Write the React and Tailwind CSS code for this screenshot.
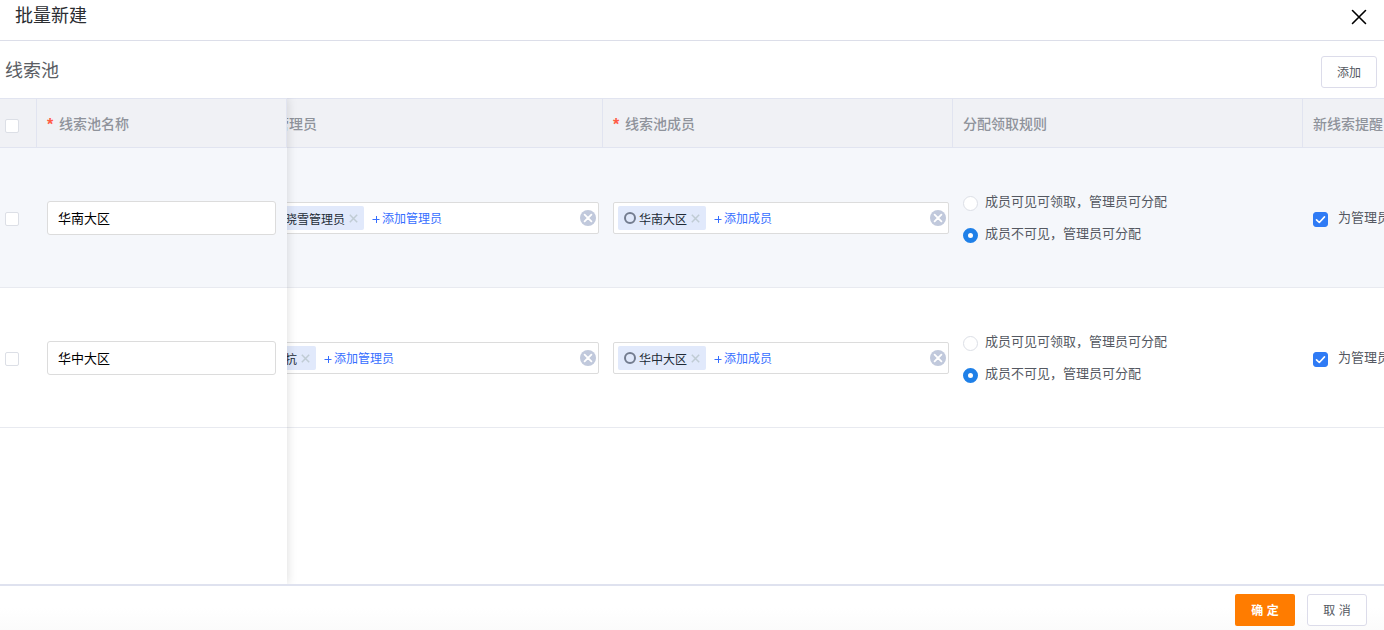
import { useLayoutEffect, useRef, useState } from "react";

const FONT = "font-['Liberation_Sans','Noto_Sans_CJK_SC',sans-serif]";

const POOLS = [
  { id: "south", name: "华南大区", manager: "晓雪管理员", member: "华南大区" },
  { id: "central", name: "华中大区", manager: "抗", member: "华中大区" },
];

function Tick({ label, checked = false }) {
  const [on, setOn] = useState(checked);
  return (
    <input
      type="checkbox"
      aria-label={label}
      checked={on}
      onChange={() => setOn(!on)}
      className="block size-3.5 appearance-none rounded-xs border border-[#dcdfe6] bg-white checked:border-[#2f7bf5] checked:bg-[#2f7bf5]"
    />
  );
}

function Tag({ text, icon }) {
  return (
    <span className={`flex h-6 shrink-0 items-center rounded-xs bg-[#e1e9fb] pr-1.5 ${icon ? "pl-1.5" : "pl-[17px]"}`}>
      {icon && (
        <svg viewBox="0 0 12 12" className="mr-[3px] size-3" fill="none" stroke="#737c8f" strokeWidth="2">
          <circle cx="6" cy="6" r="5" />
        </svg>
      )}
      <span className="pt-1 text-xs text-[#212b36]">{text}</span>
      <button type="button" aria-label={`移除${text}`} className="ml-1 block pt-px">
        <svg viewBox="0 0 9 9" className="size-[9px]" stroke="#c0ccd4" strokeWidth="1.5">
          <path d="M0.8 0.8l7.4 7.4M8.2 0.8L0.8 8.2" />
        </svg>
      </button>
    </span>
  );
}

function Picker({ tag, icon, add }) {
  return (
    <div className="flex h-8 items-center rounded-xs border border-[#dcdcdc] bg-white pr-0.5 pl-1">
      <Tag text={tag} icon={icon} />
      <button type="button" className="ml-2 flex items-center gap-0.5 pt-0.5 text-xs text-[#366eff]">
        <svg viewBox="0 0 8 8" className="size-2" stroke="currentColor" strokeWidth="1">
          <path d="M0.5 4.5h7M4.5 1v7" />
        </svg>
        <span>{add}</span>
      </button>
      <button type="button" aria-label="清空" className="ml-auto block">
        <svg viewBox="0 0 16 16" className="size-4">
          <circle cx="8" cy="8" r="8" fill="#c1c9dc" />
          <path d="M4.6 4.6l6.8 6.8M11.4 4.6l-6.8 6.8" stroke="#fff" strokeWidth="1.8" strokeLinecap="round" />
        </svg>
      </button>
    </div>
  );
}

function Rule({ group, label, defaultChecked }) {
  return (
    <label className="flex h-8 items-center gap-[7px] text-[13px] text-[#545861]">
      <input
        type="radio"
        name={group}
        defaultChecked={defaultChecked}
        className="mt-1 size-[15px] appearance-none rounded-full border border-[#dcdfe6] bg-white checked:border-5 checked:border-[#1f80e8]"
      />
      {label}
    </label>
  );
}

function HeadCell({ children, required, last }) {
  return (
    <th className={`h-[50px] border-y border-[#e1e4f0] px-2.5 pt-0.5 text-left text-sm font-medium text-[#8f939b] ${last ? "" : "border-r"}`}>
      <span className="flex items-center gap-1 whitespace-nowrap">
        {required && <span className="w-2 pt-0.5 text-base leading-none font-bold text-[#ff5b45]">*</span>}
        {children}
      </span>
    </th>
  );
}

export default function App() {
  const scroller = useRef(null);
  useLayoutEffect(() => {
    scroller.current.scrollLeft = 34;
  }, []);

  return (
    <div className={`flex h-screen flex-col bg-white text-[#333] ${FONT}`}>
      <header className="flex h-[41px] shrink-0 items-center justify-between border-b border-[#dcdee9] pr-[17px] pb-2 pl-[15px]">
        <h1 className="text-lg text-[#2b2d31]">批量新建</h1>
        <button type="button" aria-label="关闭" className="mt-0.5">
          <svg viewBox="0 0 16 16" className="size-4" stroke="#000" strokeWidth="1.6" strokeLinecap="round">
            <path d="M1.5 1.5l13 13M14.5 1.5l-13 13" />
          </svg>
        </button>
      </header>

      <div className="flex h-[57px] shrink-0 items-center justify-between pt-0.5 pr-[7px] pl-[5px]">
        <h2 className="text-lg text-[#5a5d63]">线索池</h2>
        <button type="button" className="mt-0.5 h-8 w-14 rounded-[3px] border border-[#dcdcea] pt-0.5 text-xs text-[#545861]">
          添加
        </button>
      </div>

      <main className="flex min-h-0 flex-1">
        <section className="z-10 w-[287px] shrink-0 bg-white shadow-[0_0_10px_rgba(0,0,0,0.15)] [clip-path:inset(0_-12px_0_0)]">
          <table className="w-full table-fixed border-separate border-spacing-0">
            <thead className="bg-[#f0f1f5]">
              <tr>
                <th className="h-[50px] w-[37px] border-y border-r border-[#e1e4f0] pt-1.5 pl-[5px]">
                  <Tick label="全选" />
                </th>
                <HeadCell required>线索池名称</HeadCell>
              </tr>
            </thead>
            <tbody>
              {POOLS.map((p) => (
                <tr key={p.id} className="odd:bg-[#f5f7fb]">
                  <td className="h-[140px] border-b border-[#e8eaf0] pt-0.5 pl-[5px]">
                    <Tick label={`选择${p.name}`} />
                  </td>
                  <td className="border-b border-[#e8eaf0] pr-[11px] pl-2.5">
                    <input
                      type="text"
                      aria-label="线索池名称"
                      defaultValue={p.name}
                      className="block h-[34px] w-full rounded-[3px] border border-[#dcdcdc] bg-white px-2.5 text-[13px] text-black"
                    />
                  </td>
                </tr>
              ))}
            </tbody>
          </table>
        </section>

        <section ref={scroller} className="min-w-0 flex-1 overflow-x-auto overflow-y-hidden [scrollbar-width:none]">
          <table className="w-[1400px] table-fixed border-separate border-spacing-0">
            <thead className="bg-[#f0f1f5]">
              <tr>
                <HeadCell required>管理员</HeadCell>
                <HeadCell required>线索池成员</HeadCell>
                <HeadCell>分配领取规则</HeadCell>
                <HeadCell last>新线索提醒</HeadCell>
              </tr>
            </thead>
            <tbody>
              {POOLS.map((p) => (
                <tr key={p.id} className="odd:bg-[#f5f7fb]">
                  <td className="h-[140px] border-b border-[#e8eaf0] pr-1 pl-2.5">
                    <Picker tag={p.manager} add="添加管理员" />
                  </td>
                  <td className="border-b border-[#e8eaf0] pr-1 pl-2.5">
                    <Picker tag={p.member} icon add="添加成员" />
                  </td>
                  <td className="border-b border-[#e8eaf0] pl-2.5">
                    <Rule group={p.id} label="成员可见可领取，管理员可分配" />
                    <Rule group={p.id} label="成员不可见，管理员可分配" defaultChecked />
                  </td>
                  <td className="border-b border-[#e8eaf0] pl-2.5">
                    <label className="flex items-center gap-2.5 text-[13px] text-[#545861]">
                      <span className="relative mt-1 block size-[15px]">
                        <input
                          type="checkbox"
                          defaultChecked
                          className="peer block size-full appearance-none rounded-[3px] border border-[#dcdfe6] bg-white checked:border-[#2f7bf5] checked:bg-[#2f7bf5]"
                        />
                        <svg
                          viewBox="0 0 15 15"
                          className="pointer-events-none absolute inset-0 hidden peer-checked:block"
                          fill="none"
                          stroke="#fff"
                          strokeWidth="1.6"
                          strokeLinecap="round"
                          strokeLinejoin="round"
                        >
                          <path d="M3.5 7.8l2.8 2.7 5.2-5.6" />
                        </svg>
                      </span>
                      为管理员
                    </label>
                  </td>
                </tr>
              ))}
            </tbody>
          </table>
        </section>
      </main>

      <footer className="flex shrink-0 justify-end gap-3 border-t-2 border-[#dfe2ef] bg-linear-to-b from-white from-50% to-[#fbfbfb] pt-2 pr-[17px] pb-1 text-xs">
        <button type="button" className="h-8 w-[60px] rounded-xs bg-[#ff7c00] pt-0.5 font-bold text-white">
          确 定
        </button>
        <button type="button" className="h-8 w-[60px] rounded-[3px] border border-[#dcdcea] bg-white pt-0.5 text-[#545861]">
          取 消
        </button>
      </footer>
    </div>
  );
}
